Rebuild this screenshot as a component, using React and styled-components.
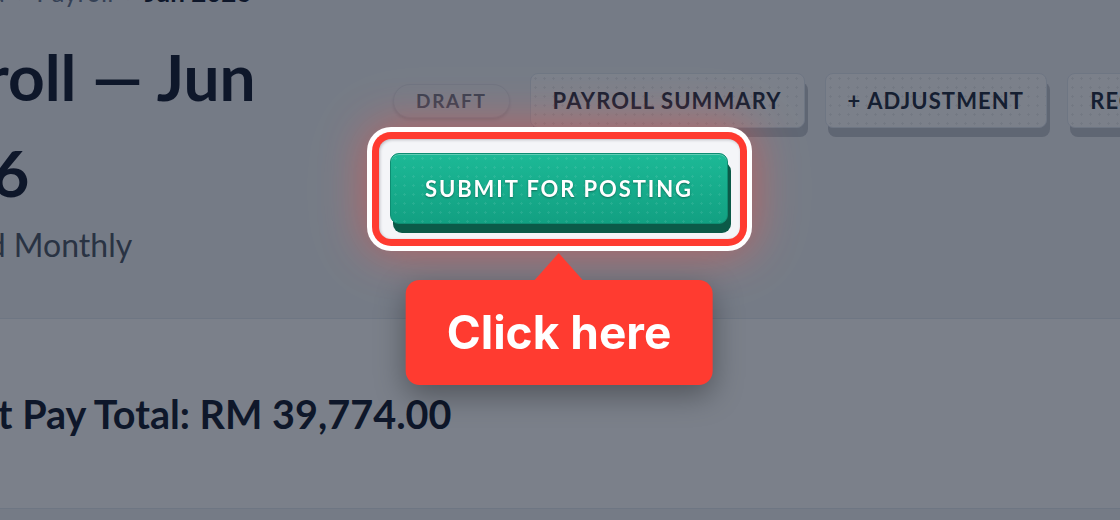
import React from 'react';
import styled, { createGlobalStyle } from 'styled-components';

const GlobalStyle = createGlobalStyle`
  html, body {
    margin: 0;
    padding: 0;
    height: 100%;
    overflow: hidden;
    background: #f2f3f6;
  }
  body {
    font-family: Lato, "Noto Sans", sans-serif;
    color: #0f172a;
  }
`;

const Page = styled.main`
  width: 1520px;
  margin: -27px 0 0 -119px;
`;

const Breadcrumb = styled.nav`
  display: flex;
  align-items: center;
  margin-bottom: 17px;
  font-size: 26px;
  line-height: 39px;
  white-space: nowrap;
`;

const Crumb = styled.span`
  font-weight: ${(p) => (p.$current ? 700 : 400)};
  color: ${(p) => (p.$current ? '#0f172a' : '#64748b')};
`;

const Sep = styled.span`
  margin: 0 12px;
  color: #94a3b8;
`;

const Header = styled.header`
  display: flex;
  align-items: flex-start;
  gap: 31px;
`;

const TitleBlock = styled.div`
  flex: none;
  width: 478px;
`;

const Title = styled.h1`
  margin: 0;
  font-size: 64px;
  line-height: 96px;
  font-weight: 700;
`;

const Subtitle = styled.p`
  margin: 0;
  font-size: 32px;
  line-height: 48px;
  color: #4b5563;
`;

const Actions = styled.div`
  flex: 1;
  display: flex;
  flex-wrap: wrap;
  align-items: center;
  gap: 25px 20px;
  padding-top: 44px;
`;

const StatusPill = styled.span`
  display: inline-flex;
  align-items: center;
  box-sizing: border-box;
  height: 34px;
  margin-left: 3px;
  padding: 0 22px;
  border: 1px solid #e2e5ea;
  border-radius: 17px;
  background: #f1f3f6;
  box-shadow: 0 2px 3px rgba(15, 23, 42, 0.12);
  font-size: 19px;
  font-weight: 700;
  letter-spacing: 1.7px;
  color: #6b7280;
`;

const ActionButton = styled.button`
  box-sizing: border-box;
  height: 55px;
  padding: 0 22px;
  border: 1px solid #e2e8f0;
  border-radius: 8px;
  background-color: #fff;
  background-image: radial-gradient(rgba(15, 23, 42, 0.07) 1px, transparent 1.4px);
  background-size: 9px 9px;
  box-shadow: 3px 9px 0 #c2c5cc;
  font-family: inherit;
  font-size: 22px;
  font-weight: 700;
  letter-spacing: 1.1px;
  text-transform: uppercase;
  color: #1e293b;
  white-space: nowrap;
`;

const Spotlight = styled.div`
  position: relative;
  z-index: 20;
  display: flex;

  &::before {
    content: '';
    position: absolute;
    inset: -14px -12px -15px -11px;
    z-index: -1;
    border-radius: 12px;
    background: #f4f5f8;
    box-shadow:
      inset 1px 1px 3px rgba(15, 23, 42, 0.25),
      0 0 0 7px #ff3b30,
      0 0 0 12px #fff,
      0 0 44px 14px rgba(255, 59, 48, 0.45),
      0 0 70px 34px rgba(255, 255, 255, 0.06);
  }
`;

const SubmitButton = styled.button`
  box-sizing: border-box;
  height: 71px;
  padding: 0 34px;
  border: 1px solid #0e8d72;
  border-radius: 9px;
  background-color: #16a887;
  background-image:
    radial-gradient(rgba(255, 255, 255, 0.08) 1px, transparent 1.4px),
    linear-gradient(#1cb996, #12a082);
  background-size: 9px 9px, 100% 100%;
  box-shadow: inset 0 1px 0 rgba(255, 255, 255, 0.3), 3px 9px 0 #0b5a48;
  font-family: inherit;
  font-size: 22px;
  font-weight: 700;
  letter-spacing: 1.9px;
  color: #fff;
  text-shadow: 0 1px 2px rgba(0, 0, 0, 0.35);
  white-space: nowrap;
`;

const Tooltip = styled.div`
  position: absolute;
  top: calc(100% + 56px);
  left: 50%;
  transform: translateX(-50%);
  padding: 25px 41px;
  border-radius: 14px;
  background: #ff3b30;
  box-shadow: 0 10px 30px rgba(0, 0, 0, 0.35);
  font-family: Inter, "Liberation Sans", sans-serif;
  font-size: 46px;
  font-weight: 700;
  line-height: 55px;
  color: #fff;
  white-space: nowrap;

  &::before {
    content: '';
    position: absolute;
    bottom: 100%;
    left: 50%;
    margin-left: -24px;
    border-style: solid;
    border-color: transparent transparent #ff3b30;
    border-width: 0 24px 27px;
  }
`;

const Summary = styled.section`
  margin: 49px 0 0 10px;
  padding: 66px 55px 65px;
  border: 1px solid #e2e8f0;
  border-radius: 12px;
  background: #fff;
`;

const NetTotal = styled.div`
  font-size: 39.6px;
  line-height: 58px;
  font-weight: 700;
`;

const Overlay = styled.div`
  position: fixed;
  inset: 0;
  z-index: 10;
  background: rgba(15, 23, 42, 0.55);
`;

export default function App() {
  return (
    <>
      <GlobalStyle />
      <Page>
        <Breadcrumb>
          <Crumb>Dashboard</Crumb>
          <Sep>›</Sep>
          <Crumb>Payroll</Crumb>
          <Sep>›</Sep>
          <Crumb $current>Jun 2026</Crumb>
        </Breadcrumb>

        <Header>
          <TitleBlock>
            <Title>Payroll — Jun 2026</Title>
            <Subtitle>Standard Monthly</Subtitle>
          </TitleBlock>

          <Actions>
            <StatusPill>DRAFT</StatusPill>
            <ActionButton>Payroll Summary</ActionButton>
            <ActionButton>+ Adjustment</ActionButton>
            <ActionButton>Recalculate</ActionButton>
            <Spotlight>
              <SubmitButton>SUBMIT FOR POSTING</SubmitButton>
              <Tooltip>Click here</Tooltip>
            </Spotlight>
          </Actions>
        </Header>

        <Summary>
          <NetTotal>Net Pay Total: RM 39,774.00</NetTotal>
        </Summary>
      </Page>
      <Overlay />
    </>
  );
}
